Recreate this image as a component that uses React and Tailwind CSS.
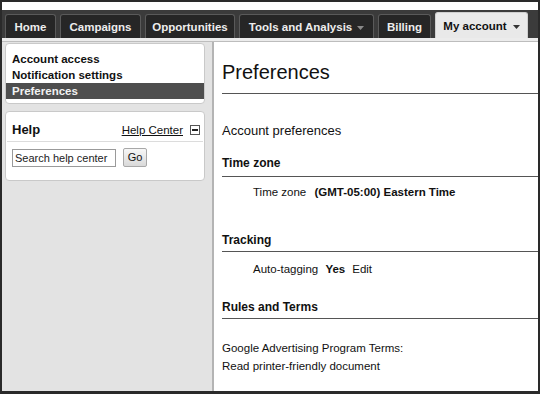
import { useState } from 'react';

const TABS = [
  { label: 'Home', w: 'w-[51px]' },
  { label: 'Campaigns', w: 'w-[81px]' },
  { label: 'Opportunities', w: 'w-[90px]' },
  { label: 'Tools and Analysis', w: 'w-[135px]', menu: true },
  { label: 'Billing', w: 'w-[53px]' },
];

const NAV = ['Account access', 'Notification settings', 'Preferences'];

function Caret({ className }) {
  return (
    <svg width="7" height="4" viewBox="0 0 7 4" className={className}>
      <path d="M0 0h7L3.5 4z" fill="currentColor" />
    </svg>
  );
}

function SectionHead({ children, className = '' }) {
  return (
    <div className={`border-b border-[#555] text-[12px] font-bold leading-[16px] text-[#111] ${className}`}>
      {children}
    </div>
  );
}

export default function App() {
  const [query, setQuery] = useState('');
  const active = 'Preferences';

  return (
    <div
      className="w-[540px] h-[394px] overflow-hidden border-2 border-b-[3px] border-[#2a2a2a] bg-white flex flex-col text-[#111]"
      style={{ fontFamily: '"Liberation Sans", Arial, sans-serif' }}
    >
      <div className="h-[8px] shrink-0 bg-white" />

      {/* top tabs */}
      <div className="h-[28px] shrink-0 bg-[#3b3b3b] flex items-end gap-[4px] pl-[3px]">
        {TABS.map((t) => (
          <div
            key={t.label}
            className={`${t.w} h-[24px] pt-[3px] rounded-t-[3px] border border-b-0 border-[#5a5a5a] bg-[#262626] flex items-center justify-center gap-[5px] text-[11.5px] font-bold text-[#ededed]`}
          >
            {t.label}
            {t.menu && <Caret className="text-[#8a8a8a]" />}
          </div>
        ))}
        <div className="w-[93px] h-[28px] pt-[1px] -mb-[2px] rounded-t-[3px] border border-b-0 border-[#cfcfcf] bg-[#e9e9e9] flex items-center justify-center gap-[6px] text-[11.5px] font-bold text-[#111]">
          My account
          <Caret className="text-[#333]" />
        </div>
      </div>
      <div className="h-[4px] shrink-0 bg-[#ececec] border-b border-[#bdbdbd]" />

      <div className="flex flex-1 min-h-0">
        {/* sidebar */}
        <aside className="w-[210px] shrink-0 bg-[#e3e3e3] px-[3px] pt-[1px]">
          <div className="w-[200px] rounded-[4px] border border-[#c9c9c9] bg-white pt-[7px] pb-[4px]">
            {NAV.map((item) => (
              <div
                key={item}
                className={`h-[16px] px-[6px] text-[11.5px] font-bold leading-[16px] ${
                  item === active ? 'bg-[#4e4e4e] text-[#f2f2f2]' : 'text-[#111]'
                }`}
              >
                {item}
              </div>
            ))}
          </div>

          <div className="mt-[7px] w-[200px] rounded-[4px] border border-[#c9c9c9] bg-white pb-[13px]">
            <div className="mx-[1px] mt-[9px] flex h-[21px] items-start border-b border-[#dcdcdc] pl-[5px] pr-[3px]">
              <span className="text-[13px] font-bold leading-[18px]">Help</span>
              <a href="#" className="ml-auto text-[11.5px] leading-[18px] text-[#111] underline">
                Help Center
              </a>
              <span className="ml-[7px] mt-[4px] flex h-[10px] w-[10px] items-center justify-center border border-[#555] bg-white">
                <span className="h-[2px] w-[6px] bg-[#222]" />
              </span>
            </div>
            <div className="mt-[6px] flex items-center gap-[7px] pl-[6px]">
              <input
                value={query}
                onChange={(e) => setQuery(e.target.value)}
                placeholder="Search help center"
                className="h-[18px] w-[104px] border border-[#9a9a9a] px-[2px] text-[11px] text-[#222] placeholder:text-[#222] outline-none"
              />
              <button className="h-[19px] w-[24px] rounded-[2px] border border-[#a8a8a8] bg-gradient-to-b from-[#f7f7f7] to-[#d9d9d9] text-[11px] text-[#111]">
                Go
              </button>
            </div>
          </div>
        </aside>

        {/* main content */}
        <main className="flex-1 border-l-2 border-[#b4b4b4] bg-white pl-[8px] pt-[17px]">
          <h1 className="border-b border-[#555] pb-[8px] text-[20px] font-normal leading-[26px] text-[#111]">
            Preferences
          </h1>

          <div className="mt-[29px] text-[13px] leading-[16px]">Account preferences</div>

          <SectionHead className="mt-[16px] pb-[5px]">Time zone</SectionHead>
          <div className="mt-[7px] pl-[31px] text-[11.5px] leading-[16px]">
            Time zone <span className="ml-[5px] font-bold">(GMT-05:00) Eastern Time</span>
          </div>

          <SectionHead className="mt-[32px] pb-[3px]">Tracking</SectionHead>
          <div className="mt-[9px] pl-[31px] text-[11.5px] leading-[16px]">
            Auto-tagging <span className="ml-[4px] font-bold">Yes</span>
            <a href="#" className="ml-[7px] text-[#111]">Edit</a>
          </div>

          <SectionHead className="mt-[22px] pb-[3px]">Rules and Terms</SectionHead>
          <div className="mt-[20px] text-[11.5px] leading-[18px]">
            <div>Google Advertising Program Terms:</div>
            <a href="#" className="text-[#111]">Read printer-friendly document</a>
          </div>
        </main>
      </div>
    </div>
  );
}
